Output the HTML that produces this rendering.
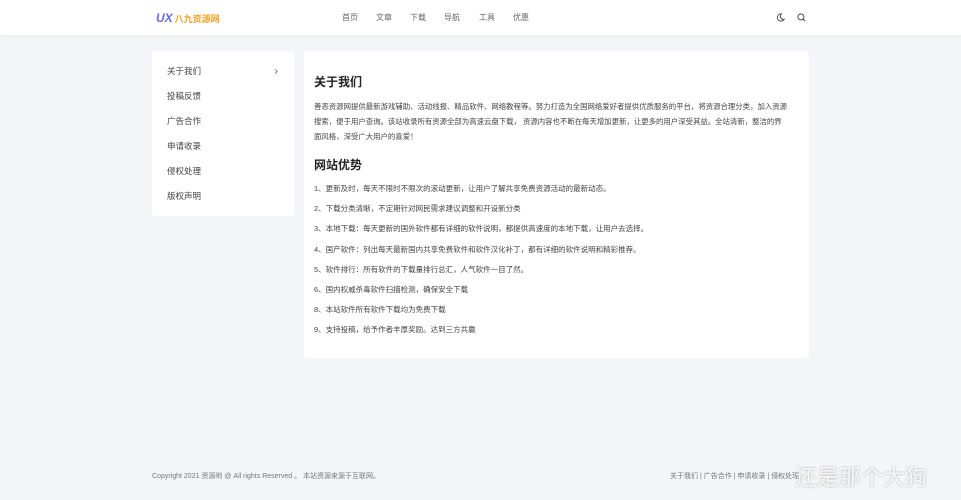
<!DOCTYPE html>
<html><head><meta charset="utf-8"><style>
*{margin:0;padding:0;box-sizing:border-box}
body{width:961px;height:500px;background:#f4f5f9;font-family:"Liberation Sans","Noto Sans CJK SC",sans-serif;color:#333;position:relative;overflow:hidden}
.hd{position:absolute;left:0;top:0;width:961px;height:35px;background:#fff;box-shadow:0 1px 3px rgba(0,0,0,.06)}
.logo{position:absolute;left:156px;top:11px;font-size:9px;color:#f0a020;font-weight:bold}
.logo b{color:#6a6adf;font-style:italic;font-size:12px;margin-right:2px}
.nav{position:absolute;top:12px;font-size:8px;color:#666}
.side{position:absolute;left:152px;top:51px;width:142px;height:165px;background:#fff;border-radius:3px}
.side div{height:25px;line-height:25px;padding-left:15px;font-size:8.5px;color:#444;position:relative}
.side div:first-child{margin-top:8px}
.main{position:absolute;left:304px;top:51px;width:505px;height:307px;background:#fff;border-radius:3px;padding:0 10px 0 10px}
h2{font-size:12px;font-weight:bold;color:#222}
.p{font-size:7.4px;line-height:15px;color:#444;white-space:nowrap}
.li{font-size:7.5px;color:#444;height:20.2px;line-height:20px}
.ft{position:absolute;top:471px;font-size:7px;color:#777}
</style></head><body>
<div class="hd">
<div class="logo"><b>UX</b>八九资源网</div>
<span class="nav" style="left:342px">首页</span>
<span class="nav" style="left:376px">文章</span>
<span class="nav" style="left:410px">下载</span>
<span class="nav" style="left:444px">导航</span>
<span class="nav" style="left:479px">工具</span>
<span class="nav" style="left:513px">优惠</span>
<svg style="position:absolute;left:776px;top:13px" width="9" height="9" viewBox="0 0 10 10"><path d="M6 1a4 4 0 1 0 3 6A3.5 3.5 0 0 1 6 1z" fill="none" stroke="#555" stroke-width="1.2"/></svg>
<svg style="position:absolute;left:797px;top:13px" width="9" height="9" viewBox="0 0 10 10"><circle cx="4.3" cy="4.3" r="3.3" fill="none" stroke="#555" stroke-width="1.2"/><path d="M6.8 6.8L9 9" stroke="#555" stroke-width="1.3"/></svg>
</div>
<div class="side">
<div>关于我们<span style="position:absolute;right:16px;top:0;font-size:10px">›</span></div>
<div>投稿反馈</div><div>广告合作</div><div>申请收录</div><div>侵权处理</div><div>版权声明</div>
</div>
<div class="main">
<h2 style="margin-top:22px;margin-bottom:9px">关于我们</h2>
<div class="p">善恶资源网提供最新游戏辅助、活动线报、精品软件、网络教程等。努力打造为全国网络爱好者提供优质服务的平台，将资源合理分类，加入资源<br>搜索，便于用户查询。该站收录所有资源全部为高速云盘下载， 资源内容也不断在每天增加更新，让更多的用户深受其益。全站清新，整洁的界<br>面风格，深受广大用户的喜爱！</div>
<h2 style="margin-top:12px;margin-bottom:6px">网站优势</h2>
<div class="li">1、更新及时，每天不限时不限次的滚动更新，让用户了解共享免费资源活动的最新动态。</div>
<div class="li">2、下载分类清晰，不定期针对网民需求建议调整和开设新分类</div>
<div class="li">3、本地下载：每天更新的国外软件都有详细的软件说明，都提供高速度的本地下载，让用户去选择。</div>
<div class="li">4、国产软件：列出每天最新国内共享免费软件和软件汉化补丁，都有详细的软件说明和精彩推荐。</div>
<div class="li">5、软件排行：所有软件的下载量排行总汇，人气软件一目了然。</div>
<div class="li">6、国内权威杀毒软件扫描检测，确保安全下载</div>
<div class="li">8、本站软件所有软件下载均为免费下载</div>
<div class="li">9、支持投稿，给予作者丰厚奖励。达到三方共赢</div>
</div>
<div class="ft" style="left:152px">Copyright 2021 资源哟 @ All rights Reserved 。 本站资源来源于互联网。</div>
<div class="ft" style="left:670px">关于我们 | 广告合作 | 申请收录 | 侵权处理</div>
<div style="position:absolute;left:795px;top:460px;font-size:22px;color:rgba(255,255,255,.85);text-shadow:0 0 2px #aaa;font-family:'Noto Sans CJK SC',sans-serif">还是那个大狗</div>
</body></html>
